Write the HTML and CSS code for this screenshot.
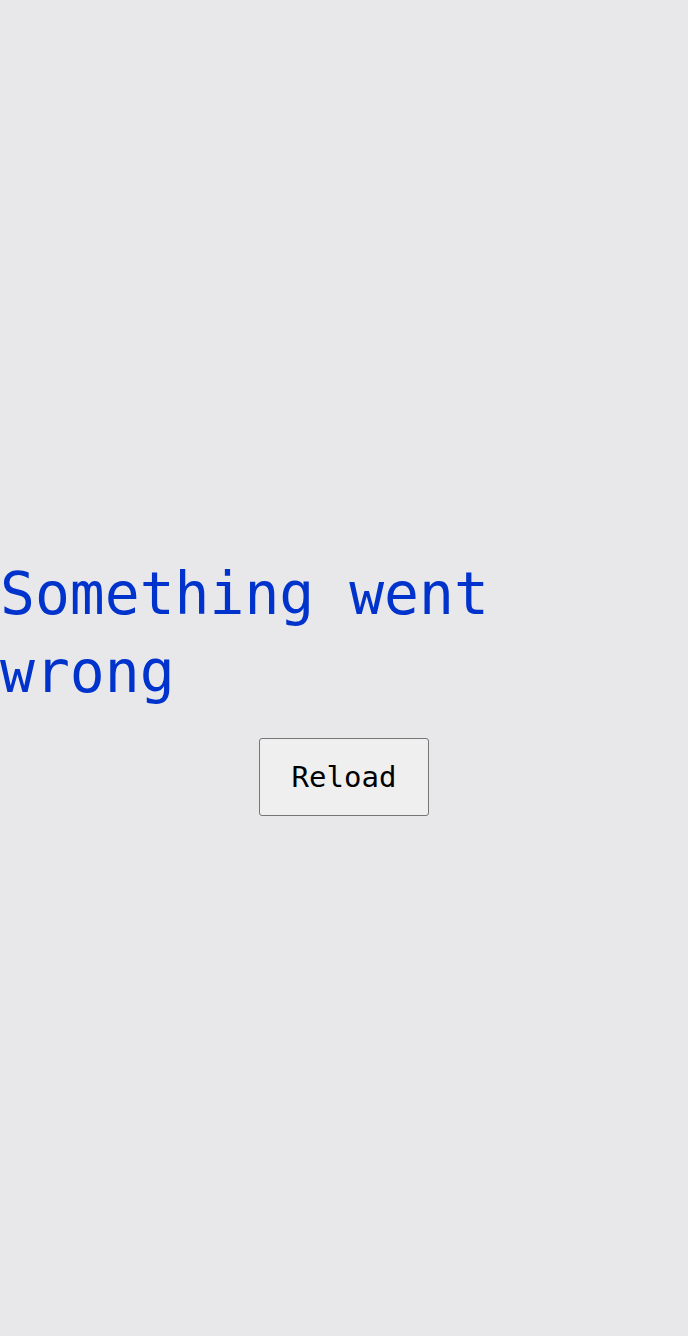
FILE: index.html
```html
<!DOCTYPE html>
<html>
<head>
<meta charset="utf-8">
<link rel="stylesheet" href="styles.css">
</head>
<body>
<main class="error-page">
  <h1 class="error-title">Something went wrong</h1>
  <button class="reload-btn" type="button">Reload</button>
</main>
</body>
</html>
```

FILE: styles.css
```css
html, body {
  margin: 0;
  padding: 0;
  background: #e8e7ea;
}
.error-page {
  min-height: 100vh;
  display: flex;
  flex-direction: column;
  justify-content: center;
  align-items: center;
  font-family: "DejaVu Sans Mono", monospace;
}
.error-title {
  align-self: stretch;
  margin: 0 0 27px 0;
  padding-top: 34px;
  font-size: 58px;
  line-height: 78px;
  font-weight: normal;
  color: #0033cc;
  text-align: left;
}
.reload-btn {
  font-family: "DejaVu Sans Mono", monospace;
  font-size: 29px;
  line-height: 34px;
  padding: 21px 32px;
  background: #efefef;
  color: #000;
  border: 1px solid #767676;
  border-radius: 3px;
}
```
